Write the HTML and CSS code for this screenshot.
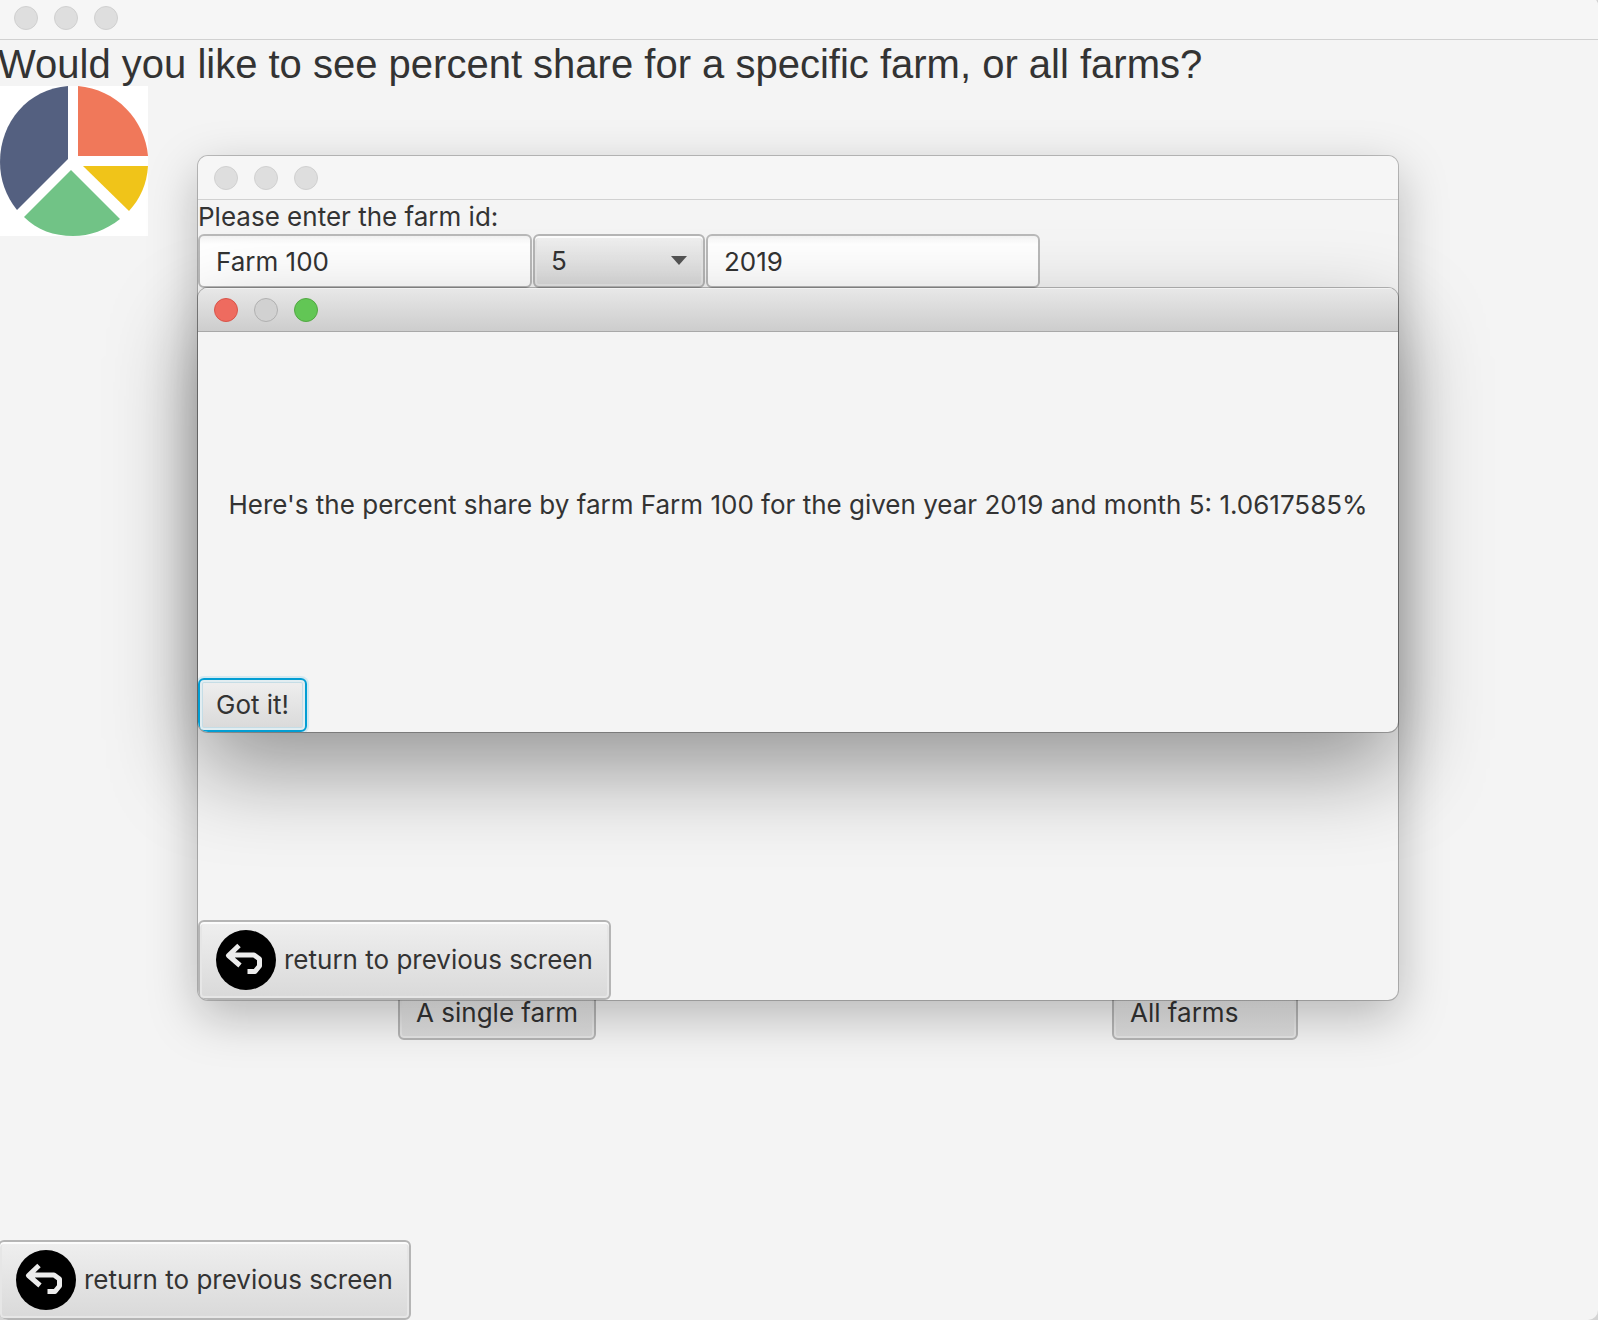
FILE: index.html
```html
<!DOCTYPE html>
<html lang="en">
<head>
<meta charset="utf-8">
<title>Percent share</title>
<link rel="stylesheet" href="styles.css">
</head>
<body>
<svg class="defs" aria-hidden="true">
  <symbol id="back" viewBox="0 0 60 60">
    <circle cx="30" cy="30" r="30" fill="#000"/>
    <path d="M23 15.500L12.500 25.500L24 35.500M13 25H38L43.500 29V36L39 41.500H31.500" fill="none" stroke="#ececec" stroke-width="5" stroke-linejoin="round"/>
  </symbol>
</svg>

<main class="window window-main">
  <header class="titlebar">
    <span class="light"></span><span class="light"></span><span class="light"></span>
  </header>
  <h1 class="heading">Would you like to see percent share for a specific farm, or all farms?</h1>
  <svg class="pie" viewBox="0 0 150 150" role="img" aria-label="Pie chart">
    <rect width="150" height="150" fill="#fff"/>
    <path d="M70 0C30 3 2 36 2 76C2 94 8 110 19 124L70 73Z" fill="#546080"/>
    <path d="M80 0C118 3 147 34 150 70H80Z" fill="#f0785a"/>
    <path d="M85 80H150C149 98 142 113 131 125Z" fill="#f0c419"/>
    <path d="M73 84L122 133C108 144 92 150 75 150C56 150 39 144 26 131Z" fill="#71c386"/>
  </svg>
  <div class="choices">
    <button class="btn" type="button">A single farm</button>
    <button class="btn btn-all" type="button">All farms</button>
  </div>
  <footer>
    <button class="btn btn-back" type="button"><svg class="back-icon" aria-hidden="true"><use href="#back"/></svg>return to previous screen</button>
  </footer>
</main>

<section class="window window-form">
  <header class="titlebar">
    <span class="light"></span><span class="light"></span><span class="light"></span>
  </header>
  <label class="prompt" for="farm">Please enter the farm id:</label>
  <div class="fields">
    <input class="field" id="farm" type="text" value="Farm 100">
    <div class="combo">
      <select class="btn combo-select" aria-label="Month"><option>5</option></select>
      <svg class="combo-arrow" viewBox="0 0 16 10" aria-hidden="true"><path d="M0 0H16L8 9Z" fill="#545454"/></svg>
    </div>
    <input class="field" type="text" value="2019" aria-label="Year">
  </div>
  <footer class="form-footer">
    <button class="btn btn-back" type="button"><svg class="back-icon" aria-hidden="true"><use href="#back"/></svg>return to previous screen</button>
  </footer>
</section>

<section class="window window-dialog" role="dialog" aria-labelledby="result">
  <header class="titlebar titlebar-active">
    <span class="light light-close"></span><span class="light"></span><span class="light light-zoom"></span>
  </header>
  <p class="message" id="result">Here's the percent share by farm Farm 100 for the given year 2019 and month 5: 1.0617585%</p>
  <footer>
    <button class="btn btn-focus" type="button">Got it!</button>
  </footer>
</section>
</body>
</html>
```
FILE: styles.css
```css
* { box-sizing: border-box; }

body {
  margin: 0;
  background: #d4d4d4;
  color: #333;
  font: 26px/32px Inter, "Liberation Sans", sans-serif;
  overflow: hidden;
}

.defs { position: absolute; width: 0; height: 0; }

.window {
  display: flex;
  flex-direction: column;
  background: #f4f4f4;
  border-radius: 10px;
  overflow: hidden;
}

/* The outer window sits partly beyond the top left of the view. */
.window-main {
  margin: -4px 0 0 -2px;
  min-height: calc(100vh + 4px);
}

.window-form {
  position: absolute;
  top: 156px;
  left: 198px;
  right: 200px;
  min-height: 844px;
  box-shadow: 0 0 0 1px rgba(0, 0, 0, .22), 0 16px 50px rgba(0, 0, 0, .26);
}

.window-dialog {
  position: absolute;
  top: 288px;
  left: 198px;
  right: 200px;
  min-height: 444px;
  box-shadow: 0 0 0 1px rgba(0, 0, 0, .26), 0 38px 88px rgba(0, 0, 0, .39);
}

.titlebar {
  display: flex;
  align-items: center;
  gap: 16px;
  height: 44px;
  padding: 0 16px;
  background: #f6f6f6;
  border-bottom: 1px solid #d1d1d1;
}

.titlebar-active {
  background: linear-gradient(#e8e8e8, #cdcdcd);
  border-bottom-color: #a8a8a8;
  box-shadow: inset 0 1px #f2f2f2;
}

.light {
  width: 24px;
  height: 24px;
  border: 1px solid #d0d0d0;
  border-radius: 50%;
  background: #dedede;
}

.titlebar-active .light { border-color: #b0b0b0; background: #d1d1d1; }
.titlebar-active .light-close { border-color: #d8544a; background: #ee6b5f; }
.titlebar-active .light-zoom { border-color: #52a843; background: #62c655; }

.heading {
  margin: 0;
  padding-top: 2px;
  font: 40px/44px "Liberation Sans", Arial, sans-serif;
}

.pie { width: 150px; height: 150px; }

.choices {
  flex: 1;
  display: flex;
  align-items: flex-end;
  justify-content: space-between;
  padding: 0 300px 200px 400px;
}

.btn {
  height: 54px;
  padding: 0 16px;
  border: 2px solid #b5b5b5;
  border-radius: 6px;
  background: linear-gradient(#efefef, #d9d9d9);
  box-shadow: inset 0 2px #fcfcfc, inset 0 0 0 2px #e6e6e6;
  color: inherit;
  font: inherit;
  text-align: left;
}

.btn-all { width: 186px; }

.btn-back {
  display: flex;
  align-items: center;
  gap: 8px;
  height: 80px;
}

.back-icon { width: 60px; height: 60px; }

.btn-focus {
  display: block;
  border-color: #039ed3;
  box-shadow: 0 0 0 2px #d3e9f1, inset 0 0 0 2px #e2edf1, inset 0 0 0 3px #c5dde6;
}

.prompt { padding-top: 1px; }

.fields { display: flex; gap: 1px; padding-top: 1px; }

.field {
  width: 334px;
  height: 54px;
  padding: 0 16px;
  border: 2px solid #b9b9b9;
  border-radius: 6px;
  background: linear-gradient(#f2f2f2, #fff 8px);
  color: inherit;
  font: inherit;
}

.combo { display: grid; align-items: center; width: 172px; }

.combo-select {
  grid-area: 1 / 1;
  width: 100%;
  appearance: none;
}

.combo-arrow {
  grid-area: 1 / 1;
  justify-self: end;
  width: 16px;
  height: 10px;
  margin-right: 18px;
  pointer-events: none;
}

.form-footer { margin-top: auto; }

.message {
  flex: 1;
  display: flex;
  align-items: center;
  justify-content: center;
  margin: 0;
}
```
